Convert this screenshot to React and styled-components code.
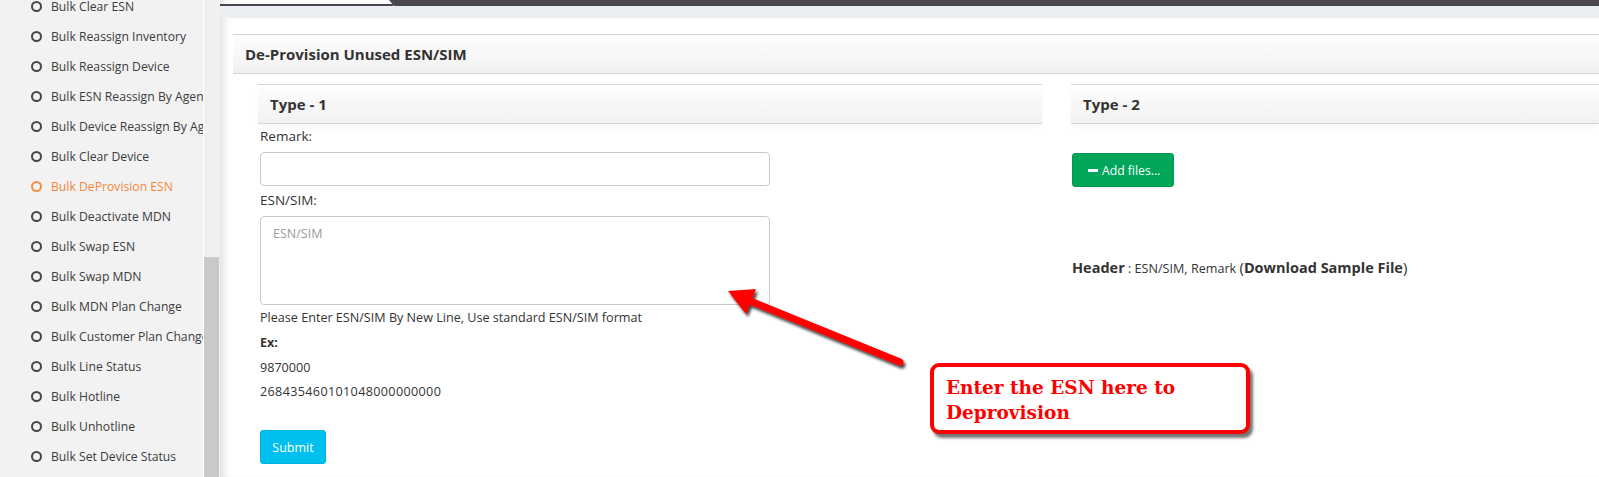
import styled, { createGlobalStyle } from "styled-components";

const GlobalStyle = createGlobalStyle`
  html, body {
    margin: 0;
    padding: 0;
    background: #fff;
  }
  body {
    font-family: "Open Sans", "Liberation Sans", sans-serif;
    color: #333;
  }
  * {
    box-sizing: border-box;
  }
`;

const menuItems = [
  "Bulk Clear ESN",
  "Bulk Reassign Inventory",
  "Bulk Reassign Device",
  "Bulk ESN Reassign By Agent",
  "Bulk Device Reassign By Agent",
  "Bulk Clear Device",
  "Bulk DeProvision ESN",
  "Bulk Deactivate MDN",
  "Bulk Swap ESN",
  "Bulk Swap MDN",
  "Bulk MDN Plan Change",
  "Bulk Customer Plan Change",
  "Bulk Line Status",
  "Bulk Hotline",
  "Bulk Unhotline",
  "Bulk Set Device Status",
];

export default function App() {
  return (
    <>
      <GlobalStyle />
      <Page>
        <Sidebar>
          <MenuList>
            {menuItems.map((label) => (
              <MenuItem key={label} active={label === "Bulk DeProvision ESN"}>
                <Ring />
                <span>{label}</span>
              </MenuItem>
            ))}
          </MenuList>
        </Sidebar>
        <Scrollbar>
          <Thumb />
        </Scrollbar>
        <Main>
          <TopBar>
            <ActiveTab />
            <TopFill />
          </TopBar>
          <Band />
          <Content>
            <PanelHeading>De-Provision Unused ESN/SIM</PanelHeading>
            <Columns>
              <Column>
                <BoxHeading>Type - 1</BoxHeading>
                <Form>
                  <Label>Remark:</Label>
                  <Input type="text" />
                  <Label margin="5px 0 0">ESN/SIM:</Label>
                  <TextArea placeholder="ESN/SIM" />
                  <Note margin="4px 0 0">
                    Please Enter ESN/SIM By New Line, Use standard ESN/SIM format
                  </Note>
                  <Note margin="7px 0 0" bold>
                    Ex:
                  </Note>
                  <Note margin="7px 0 0">9870000</Note>
                  <Note margin="6px 0 0" spaced>
                    268435460101048000000000
                  </Note>
                  <SubmitButton type="button">Submit</SubmitButton>
                </Form>
              </Column>
              <Column>
                <BoxHeading>Type - 2</BoxHeading>
                <UploadArea>
                  <AddButton type="button">
                    <Dash />
                    Add files...
                  </AddButton>
                  <HeaderLine>
                    <Strong>Header</Strong> : ESN/SIM, Remark <Paren>(</Paren>
                    <Strong>Download Sample File</Strong>
                    <Paren>)</Paren>
                  </HeaderLine>
                </UploadArea>
              </Column>
            </Columns>
          </Content>

          <ArrowSvg width="220" height="110" viewBox="0 0 220 110">
            <defs>
              <filter id="arrowShadow" x="-20%" y="-20%" width="140%" height="160%">
                <feDropShadow dx="2" dy="3" stdDeviation="1.6" floodColor="#000" floodOpacity="0.75" />
              </filter>
            </defs>
            <g filter="url(#arrowShadow)">
              <line x1="48" y1="30" x2="200" y2="92" stroke="#ff0000" strokeWidth="7" strokeLinecap="round" />
              <polygon points="28,21 56,19 46,44" fill="#ff0000" />
            </g>
          </ArrowSvg>

          <Callout>
            Enter the ESN here to
            <br />
            Deprovision
          </Callout>
        </Main>
      </Page>
    </>
  );
}

const Page = styled.div`
  display: flex;
  height: 477px;
  width: 1599px;
  overflow: hidden;
`;

const Sidebar = styled.aside`
  width: 204px;
  flex-shrink: 0;
  background: #f2f2f2;
  border-right: 1px solid #fff;
  overflow: hidden;
`;

const MenuList = styled.ul`
  list-style: none;
  margin: -9px 0 0;
  padding: 0 0 0 31px;
`;

const MenuItem = styled.li`
  display: flex;
  align-items: center;
  height: 30px;
  gap: 9px;
  white-space: nowrap;
  font-size: 12.2px;
  color: ${(props) => (props.active ? "#f5873b" : "#3c3c3c")};
`;

const Ring = styled.span`
  width: 11px;
  height: 11px;
  flex-shrink: 0;
  border-radius: 50%;
  border: 2px solid currentColor;
  opacity: 0.95;
`;

const Scrollbar = styled.div`
  width: 16px;
  flex-shrink: 0;
  background: #f0f0f0;
  display: flex;
  flex-direction: column;
  justify-content: flex-end;
`;

const Thumb = styled.div`
  height: 220px;
  width: 15px;
  background: #c9c9c9;
`;

const Main = styled.main`
  position: relative;
  flex: 1;
  min-width: 0;
  overflow: hidden;
  background: #fff;
  box-shadow: inset 9px 0 8px -5px rgba(0, 0, 0, 0.12);
`;

const TopBar = styled.div`
  display: flex;
  height: 6px;
`;

const ActiveTab = styled.div`
  width: 173px;
  border-bottom: 2px solid #4b454e;
`;

const TopFill = styled.div`
  flex: 1;
  margin-left: -4px;
  background: #4b454e;
  clip-path: polygon(0 0, 100% 0, 100% 100%, 5px 100%);
`;

const Band = styled.div`
  height: 12px;
  background: #ebeef2;
`;

const Content = styled.div`
  padding: 16px 0 0 13px;
`;

const headingBar = `
  display: flex;
  align-items: center;
  height: 40px;
  padding-left: 12px;
  border-top: 1px solid #d5d5d5;
  border-bottom: 1px solid #d5d5d5;
  background: linear-gradient(#fefefe, #f1f1f1);
  font-size: 15px;
  font-weight: 700;
  color: #333;
  white-space: nowrap;
`;

const PanelHeading = styled.h3`
  ${headingBar}
  margin: 0;
`;

const Columns = styled.div`
  display: grid;
  grid-template-columns: 784px 1fr;
  column-gap: 29px;
  margin-top: 10px;
  padding-left: 25px;
`;

const Column = styled.section`
  display: flex;
  flex-direction: column;
  min-width: 0;
`;

const BoxHeading = styled.h4`
  ${headingBar}
  margin: 0;
  box-shadow: 0 4px 6px -2px rgba(0, 0, 0, 0.06);
`;

const Form = styled.form`
  display: flex;
  flex-direction: column;
  align-items: flex-start;
  padding: 3px 0 0 2px;
`;

const Label = styled.label`
  font-size: 13.5px;
  line-height: 18px;
  color: #333;
  margin: ${(props) => props.margin || "0"};
`;

const fieldStyle = `
  width: 510px;
  border: 1px solid #c9c9c9;
  border-radius: 4px;
  background: #fff;
  font-family: "Open Sans", "Liberation Sans", sans-serif;
  font-size: 12.5px;
  outline: none;
`;

const Input = styled.input`
  ${fieldStyle}
  height: 34px;
  margin-top: 7px;
`;

const TextArea = styled.textarea`
  ${fieldStyle}
  height: 89px;
  margin-top: 7px;
  padding: 8px 12px;
  resize: none;
  &::placeholder {
    color: #9a9a9a;
  }
`;

const Note = styled.p`
  font-size: 12.6px;
  line-height: 18px;
  color: #333;
  font-weight: ${(props) => (props.bold ? 700 : 400)};
  letter-spacing: ${(props) => (props.spaced ? "0.35px" : "normal")};
  margin: ${(props) => props.margin || "0"};
`;

const SubmitButton = styled.button`
  margin-top: 29px;
  width: 66px;
  height: 34px;
  border: 1px solid #00b3e0;
  border-radius: 3px;
  background: #00c0ef;
  color: #fff;
  font-family: "Open Sans", "Liberation Sans", sans-serif;
  font-size: 12.5px;
  cursor: pointer;
`;

const UploadArea = styled.div`
  display: flex;
  flex-direction: column;
  align-items: flex-start;
  padding: 29px 0 0 1px;
`;

const AddButton = styled.button`
  display: flex;
  align-items: center;
  gap: 4px;
  width: 102px;
  height: 34px;
  padding: 0 0 0 15px;
  border: 1px solid #009551;
  border-radius: 3px;
  background: #00a65a;
  color: #fff;
  font-family: "Open Sans", "Liberation Sans", sans-serif;
  font-size: 12.2px;
  cursor: pointer;
`;

const Dash = styled.span`
  width: 10px;
  height: 3px;
  background: #fff;
`;

const HeaderLine = styled.p`
  margin: 70px 0 0;
  font-size: 12.6px;
  line-height: 20px;
  color: #333;
  white-space: nowrap;
`;

const Strong = styled.b`
  font-size: 14.5px;
  font-weight: 700;
`;

const Paren = styled.span`
  font-size: 15px;
`;

const ArrowSvg = styled.svg`
  position: absolute;
  left: 480px;
  top: 270px;
  overflow: visible;
`;

const Callout = styled.div`
  position: absolute;
  left: 710px;
  top: 363px;
  width: 320px;
  height: 71px;
  padding: 8px 0 0 12px;
  border: 4px solid #ff0000;
  border-radius: 9px;
  background: #fff;
  box-shadow: 3px 4px 3px rgba(0, 0, 0, 0.55);
  font-family: "DejaVu Serif", "Liberation Serif", serif;
  font-weight: 700;
  font-size: 18.5px;
  line-height: 25px;
  color: #ff0000;
  white-space: nowrap;
`;
